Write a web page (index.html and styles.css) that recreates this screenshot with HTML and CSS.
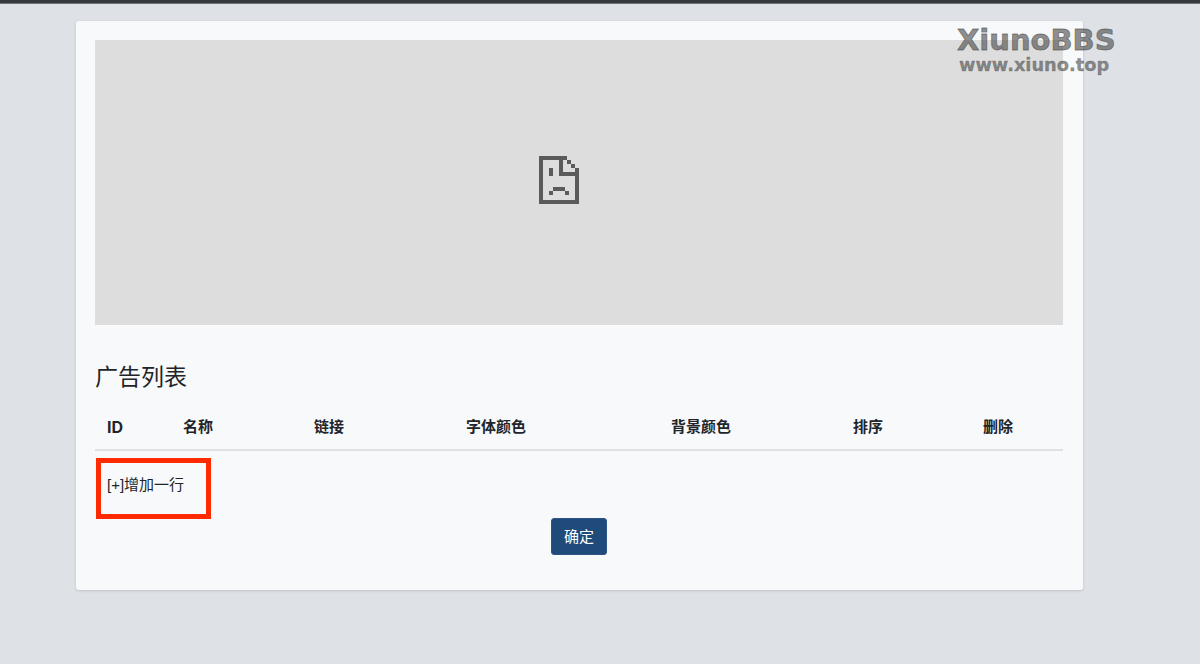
FILE: index.html
```html
<!DOCTYPE html>
<html lang="zh-CN">
<head>
<meta charset="utf-8">
<title>广告列表</title>
<link rel="stylesheet" href="styles.css">
</head>
<body>
<div class="topbar"></div>
<main class="card">
  <div class="banner">
    <svg class="broken" width="40" height="48" viewBox="0 0 40 48" shape-rendering="crispEdges" aria-hidden="true">
      <path fill="#5a5a5a" d="M0 0H28V4H4V44H36V12H40V48H0Z"/>
      <path fill="#5a5a5a" d="M20 0H24V16H40V20H20Z"/>
      <path fill="#5a5a5a" d="M28 4H32V8H28ZM32 8H36V12H32ZM10 12H14V20H10ZM14 31H26V35H14ZM10 35H14V39H10ZM26 35H30V39H26Z"/>
    </svg>
  </div>
  <h2 class="title">广告列表</h2>
  <table class="list">
    <thead>
      <tr>
        <th class="c-id">ID</th>
        <th class="c-name">名称</th>
        <th class="c-link">链接</th>
        <th class="c-font">字体颜色</th>
        <th class="c-bg">背景颜色</th>
        <th class="c-sort">排序</th>
        <th class="c-del">删除</th>
      </tr>
    </thead>
    <tbody>
      <tr><td colspan="7"><a class="add">[+]增加一行</a></td></tr>
    </tbody>
  </table>
  <div class="actions"><button class="ok" type="button">确定</button></div>
  <div class="mark"></div>
  <div class="watermark">
    <div class="wm-big">XiunoBBS</div>
    <div class="wm-small">www.xiuno.top</div>
  </div>
</main>
</body>
</html>
```
FILE: styles.css
```css
* { box-sizing: border-box; }
html, body { height: 100%; }
body {
  margin: 0;
  background: #dee2e6;
  color: #212529;
  font-family: Inter, "Noto Sans CJK SC", sans-serif;
  font-size: 15px;
  overflow: hidden;
}
.topbar {
  height: 4px;
  background: #343a40;
  border-bottom: 1px solid #6c757d;
}
.card {
  position: relative;
  width: 1007px;
  height: 569px;
  margin: 17px 0 0 76px;
  padding: 19px 20px 0 19px;
  background: #f8f9fa;
  border-radius: 3px;
  box-shadow: 0 1px 3px rgba(0, 0, 0, .14);
}
.banner {
  height: 285px;
  background: #dddddd;
  display: flex;
  align-items: center;
  justify-content: center;
}
.broken { display: block; margin-left: -41px; margin-bottom: 6px; }
.title {
  margin: 37px 0 0;
  font-size: 23px;
  line-height: 30px;
  font-weight: 400;
}
.list {
  width: 968px;
  margin-top: 9px;
  border-collapse: collapse;
  table-layout: fixed;
}
.list th {
  height: 49px;
  padding: 0 12px;
  text-align: left;
  font-size: 15px;
  font-weight: 700;
  border-bottom: 2px solid #dee2e6;
}
.list th.c-id { padding-top: 3px; font-size: 16px; }
.list td { height: 69px; padding: 0 12px; }
.c-id { width: 76px; }
.c-name { width: 131px; }
.c-link { width: 152px; }
.c-font { width: 205px; }
.c-bg { width: 182px; }
.c-sort { width: 130px; }
.c-del { width: 92px; }
.add {
  display: block;
  margin-top: -3px;
  color: #212529;
  font-family: "Liberation Sans", "Noto Sans CJK SC", sans-serif;
}
.actions { display: flex; justify-content: center; }
.ok {
  width: 56px;
  height: 37px;
  margin-top: -1px;
  padding: 0 0 2px;
  border: 1px solid #2c5587;
  border-radius: 3px;
  background: #1f4a7a;
  color: #fff;
  font: 15px Inter, "Noto Sans CJK SC", sans-serif;
}
.mark {
  position: absolute;
  left: 20px;
  top: 437px;
  width: 115px;
  height: 61px;
  border: 5px solid #ff2a00;
}
.watermark {
  position: absolute;
  left: 881px;
  top: 2px;
  width: 160px;
  color: rgba(70, 70, 70, .6);
  font-family: "DejaVu Sans", sans-serif;
  font-weight: 700;
  white-space: nowrap;
}
.wm-big { font-size: 29px; line-height: 34px; -webkit-text-stroke: .8px rgba(70, 70, 70, .6); }
.wm-small { font-size: 17.8px; line-height: 16px; margin-left: 2px; -webkit-text-stroke: .3px rgba(70, 70, 70, .6); }
```
